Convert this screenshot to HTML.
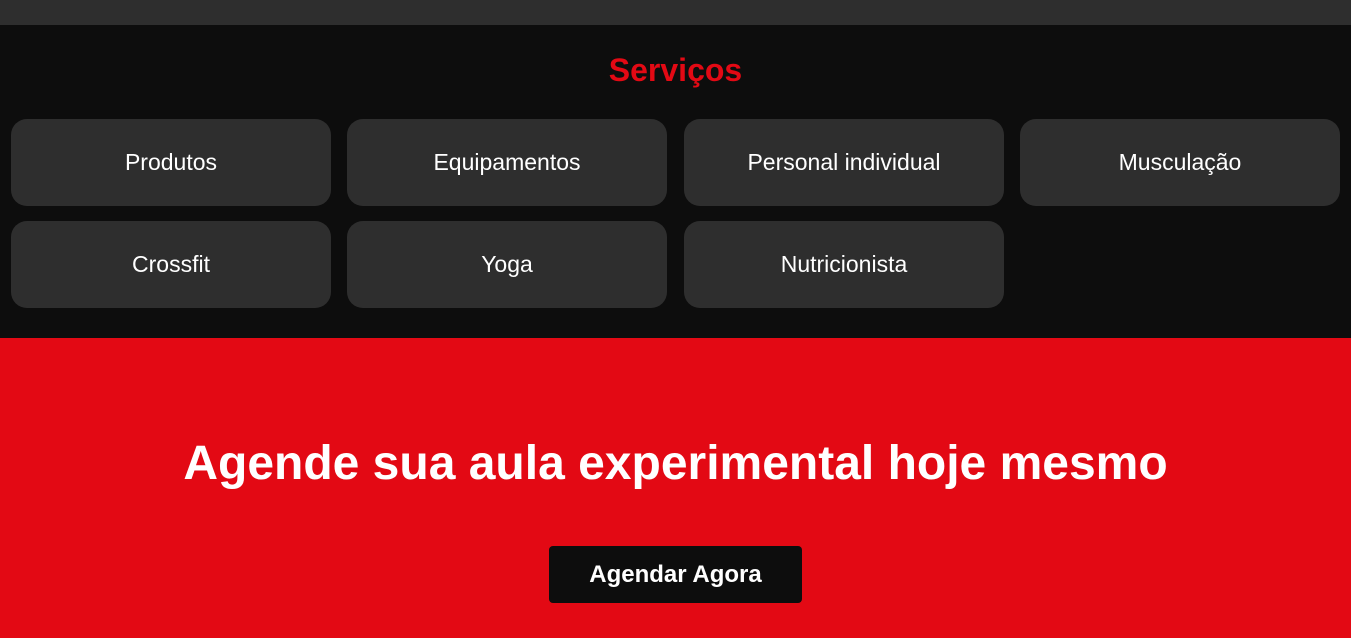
<!DOCTYPE html>
<html><head><meta charset="utf-8"><style>
*{margin:0;padding:0;box-sizing:border-box}
body{width:1351px;height:638px;overflow:hidden;font-family:"Liberation Sans",Arial,sans-serif;background:#0d0d0d}
.top{height:25px;background:#2e2e2e}
.sv{height:313px;background:#0d0d0d;position:relative}
.sv h2{position:absolute;top:27px;left:0;right:0;text-align:center;color:#e30914;font-size:32px;font-weight:bold}
.card{position:absolute;width:320px;height:87px;background:#2e2e2e;border-radius:16px;color:#fff;font-size:23px;display:flex;align-items:center;justify-content:center}
.cta{height:300px;background:#e30914;position:relative}
.cta h1{position:absolute;top:98px;left:0;right:0;text-align:center;color:#fff;font-size:48px;font-weight:bold}
.btn{position:absolute;left:549px;top:208px;width:253px;height:57px;background:#0d0d0d;border-radius:4px;color:#fff;font-size:24px;font-weight:bold;display:flex;align-items:center;justify-content:center}
</style></head><body>
<div class="top"></div>
<div class="sv">
<h2>Serviços</h2>
<div class="card" style="left:11px;top:94px">Produtos</div>
<div class="card" style="left:347px;top:94px">Equipamentos</div>
<div class="card" style="left:684px;top:94px">Personal individual</div>
<div class="card" style="left:1020px;top:94px">Musculação</div>
<div class="card" style="left:11px;top:196px">Crossfit</div>
<div class="card" style="left:347px;top:196px">Yoga</div>
<div class="card" style="left:684px;top:196px">Nutricionista</div>
</div>
<div class="cta">
<h1>Agende sua aula experimental hoje mesmo</h1>
<div class="btn">Agendar Agora</div>
</div>
</body></html>
